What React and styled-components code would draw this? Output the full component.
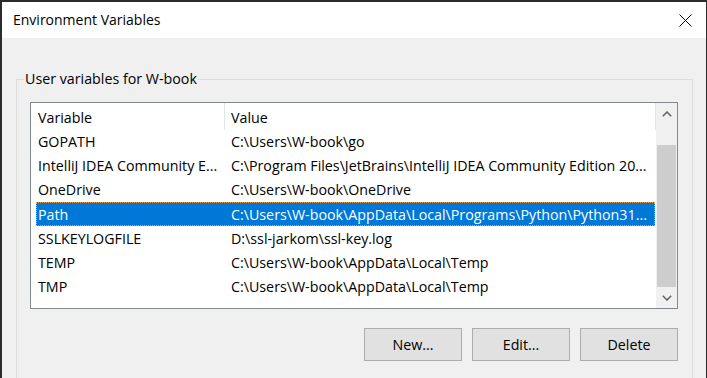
import React from "react";
import styled, { createGlobalStyle } from "styled-components";

const GlobalStyle = createGlobalStyle`
  html, body {
    margin: 0;
    padding: 0;
    background: #f0f0f0;
  }
  * { box-sizing: border-box; }
  body {
    font-family: "Segoe UI", "Open Sans", "Noto Sans", sans-serif;
    font-size: 14.25px;
    color: #000;
  }
`;

const Window = styled.div`
  width: 707px;
  height: 378px;
  overflow: hidden;
  display: flex;
  flex-direction: column;
  background: #f0f0f0;
  border-top: 2px solid #2b2b2b;
  border-left: 2px solid #2b2b2b;
  border-right: 1px solid #2b2b2b;
`;

const TitleBar = styled.div`
  height: 36px;
  flex: none;
  background: #ffffff;
  display: flex;
  align-items: center;
  justify-content: space-between;
  padding: 0 14px 0 11px;
`;

const Title = styled.span`
  font-size: 14px;
  line-height: 20px;
`;

const CloseButton = styled.button`
  border: none;
  background: transparent;
  padding: 0;
  width: 13px;
  height: 13px;
  display: flex;
  cursor: default;
`;

const Body = styled.div`
  flex: 1;
  padding: 41px 13px 0 14px;
`;

const GroupBox = styled.div`
  position: relative;
  border: 1px solid #dcdcdc;
  padding: 22px 14px 40px 13px;
`;

const Caption = styled.span`
  position: absolute;
  top: -11px;
  left: 7px;
  padding: 0 1px;
  line-height: 20px;
  background: #f0f0f0;
`;

const List = styled.div`
  height: 207px;
  border: 1px solid #828790;
  background: #ffffff;
  display: flex;
`;

const ListMain = styled.div`
  flex: 1;
  min-width: 0;
  display: flex;
  flex-direction: column;
`;

const Header = styled.div`
  height: 26.5px;
  flex: none;
  display: grid;
  grid-template-columns: 194px 1fr;
  border-right: 1px solid #e5e5e5;
`;

const HeaderCell = styled.div`
  display: flex;
  align-items: center;
  padding: 2px 0 0 ${(p) => p.$pad}px;
  border-right: ${(p) => (p.$divider ? "1px solid #e5e5e5" : "none")};
  white-space: nowrap;
`;

const Row = styled.div`
  height: 24.17px;
  flex: none;
  margin: 0 1px 0 5px;
  display: grid;
  grid-template-columns: 189px 1fr;
  align-items: center;
  white-space: nowrap;
  background: ${(p) => (p.$selected ? "#0078d7" : "transparent")};
  color: ${(p) => (p.$selected ? "#ffffff" : "#000000")};
  outline: ${(p) => (p.$selected ? "1px dotted #f5a04a" : "none")};
  outline-offset: -1px;
`;

const Cell = styled.div`
  padding-left: ${(p) => p.$pad}px;
  overflow: hidden;
`;

const ScrollBar = styled.div`
  width: 21px;
  flex: none;
  background: #f0f0f0;
  display: flex;
  flex-direction: column;
`;

const ScrollArrow = styled.div`
  height: 21px;
  flex: none;
  display: flex;
  align-items: center;
  justify-content: center;
`;

const Track = styled.div`
  flex: 1;
  display: flex;
  flex-direction: column;
  justify-content: flex-end;
`;

const Thumb = styled.div`
  height: 142px;
  margin: 0 1px;
  background: #cdcdcd;
`;

const Buttons = styled.div`
  display: flex;
  justify-content: flex-end;
  gap: 10px;
  margin-top: 19px;
`;

const Button = styled.button`
  width: 98px;
  height: 33px;
  border: 1px solid #adadad;
  background: #e1e1e1;
  font-family: inherit;
  font-size: 14.25px;
  color: #000;
  padding: 0;
`;

const rows = [
  ["GOPATH", "C:\\Users\\W-book\\go"],
  ["IntelliJ IDEA Community E...", "C:\\Program Files\\JetBrains\\IntelliJ IDEA Community Edition 20..."],
  ["OneDrive", "C:\\Users\\W-book\\OneDrive"],
  ["Path", "C:\\Users\\W-book\\AppData\\Local\\Programs\\Python\\Python31..."],
  ["SSLKEYLOGFILE", "D:\\ssl-jarkom\\ssl-key.log"],
  ["TEMP", "C:\\Users\\W-book\\AppData\\Local\\Temp"],
  ["TMP", "C:\\Users\\W-book\\AppData\\Local\\Temp"],
];

const Chevron = ({ up }) => (
  <svg width="10" height="6" viewBox="0 0 10 6">
    <polyline
      points={up ? "0.8,5.2 5,1 9.2,5.2" : "0.8,0.8 5,5 9.2,0.8"}
      fill="none"
      stroke="#606060"
      strokeWidth="1.5"
    />
  </svg>
);

export default function App() {
  return (
    <>
      <GlobalStyle />
      <Window>
        <TitleBar>
          <Title>Environment Variables</Title>
          <CloseButton aria-label="Close">
            <svg width="13" height="13" viewBox="0 0 13 13">
              <path d="M0.5 0.5 L12.5 12.5 M12.5 0.5 L0.5 12.5" stroke="#000" strokeWidth="1" />
            </svg>
          </CloseButton>
        </TitleBar>
        <Body>
          <GroupBox>
            <Caption>User variables for W-book</Caption>
            <List>
              <ListMain>
                <Header>
                  <HeaderCell $pad={7} $divider>Variable</HeaderCell>
                  <HeaderCell $pad={6}>Value</HeaderCell>
                </Header>
                {rows.map(([name, value]) => (
                  <Row key={name} $selected={name === "Path"}>
                    <Cell $pad={2}>{name}</Cell>
                    <Cell $pad={6}>{value}</Cell>
                  </Row>
                ))}
              </ListMain>
              <ScrollBar>
                <ScrollArrow>
                  <Chevron up />
                </ScrollArrow>
                <Track>
                  <Thumb />
                </Track>
                <ScrollArrow>
                  <Chevron />
                </ScrollArrow>
              </ScrollBar>
            </List>
            <Buttons>
              <Button>New...</Button>
              <Button>Edit...</Button>
              <Button>Delete</Button>
            </Buttons>
          </GroupBox>
        </Body>
      </Window>
    </>
  );
}
